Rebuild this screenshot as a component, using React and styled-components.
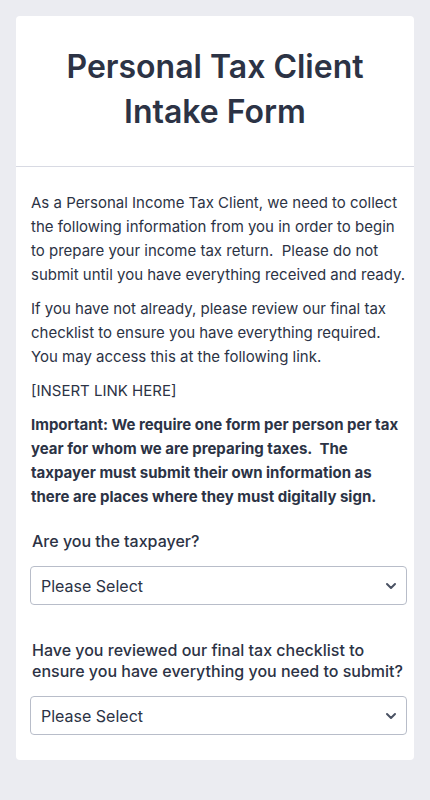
import React from 'react';
import styled, { createGlobalStyle } from 'styled-components';

const GlobalStyle = createGlobalStyle`
  html, body {
    margin: 0;
    padding: 0;
    background: #ebecf1;
  }
  body {
    font-family: Inter, "Noto Sans", sans-serif;
    color: #2c3345;
  }
`;

const Page = styled.div`
  padding: 16px 16px 40px;
  min-height: 800px;
  box-sizing: border-box;
`;

const Card = styled.div`
  background: #fff;
  border-radius: 4px;
`;

const Header = styled.div`
  padding: 28px 16px 32px;
  border-bottom: 1px solid #d8dae3;
  text-align: center;
`;

const Title = styled.h1`
  margin: 0;
  font-size: 32px;
  line-height: 45px;
  font-weight: 600;
  color: #2c3345;
`;

const Body = styled.div`
  padding: 24px 7px 25px 14px;
`;

const Para = styled.p`
  margin: 0 0 10px;
  padding-left: 1px;
  font-size: 15px;
  line-height: 24px;
  font-weight: ${p => (p.$bold ? 700 : 400)};
`;

const Field = styled.div`
  margin-top: ${p => p.$top}px;
`;

const Label = styled.label`
  display: block;
  padding-left: 2px;
  font-size: 16px;
  line-height: 21px;
  font-weight: 500;
  margin-bottom: 14px;
`;

const SelectWrap = styled.div`
  position: relative;
`;

const Select = styled.select`
  appearance: none;
  width: 100%;
  height: 39px;
  box-sizing: border-box;
  border: 1px solid #b8bdc9;
  border-radius: 4px;
  background: #fff;
  padding: 0 36px 0 10px;
  font-family: Inter, "Noto Sans", sans-serif;
  font-size: 16px;
  color: #2c3345;
`;

const Chevron = styled.svg`
  position: absolute;
  right: 10px;
  top: 50%;
  transform: translateY(-50%);
  pointer-events: none;
`;

function PickOne({ label, top }) {
  return (
    <Field $top={top}>
      <Label>{label}</Label>
      <SelectWrap>
        <Select defaultValue="">
          <option value="">Please Select</option>
          <option value="yes">Yes</option>
          <option value="no">No</option>
        </Select>
        <Chevron width="12" height="8" viewBox="0 0 12 8">
          <path d="M2 2l4 4 4-4" fill="none" stroke="#4a5263" strokeWidth="2" strokeLinecap="round" strokeLinejoin="round" />
        </Chevron>
      </SelectWrap>
    </Field>
  );
}

export default function App() {
  return (
    <Page>
      <GlobalStyle />
      <Card>
        <Header>
          <Title>Personal Tax Client Intake Form</Title>
        </Header>
        <Body>
          <Para>
            As a Personal Income Tax Client, we need to collect the following information from you in order to begin to prepare your income tax return.&nbsp; Please do not submit until you have everything received and ready.
          </Para>
          <Para>
            If you have not already, please review our final tax checklist to ensure you have everything required.&nbsp; You may access this at the following link.
          </Para>
          <Para>[INSERT LINK HERE]</Para>
          <Para $bold>
            Important: We require one form per person per tax year for whom we are preparing taxes.&nbsp; The taxpayer must submit their own information as there are places where they must digitally sign.
          </Para>
          <PickOne top={22} label="Are you the taxpayer?" />
          <PickOne top={35} label="Have you reviewed our final tax checklist to ensure you have everything you need to submit?" />
        </Body>
      </Card>
    </Page>
  );
}
